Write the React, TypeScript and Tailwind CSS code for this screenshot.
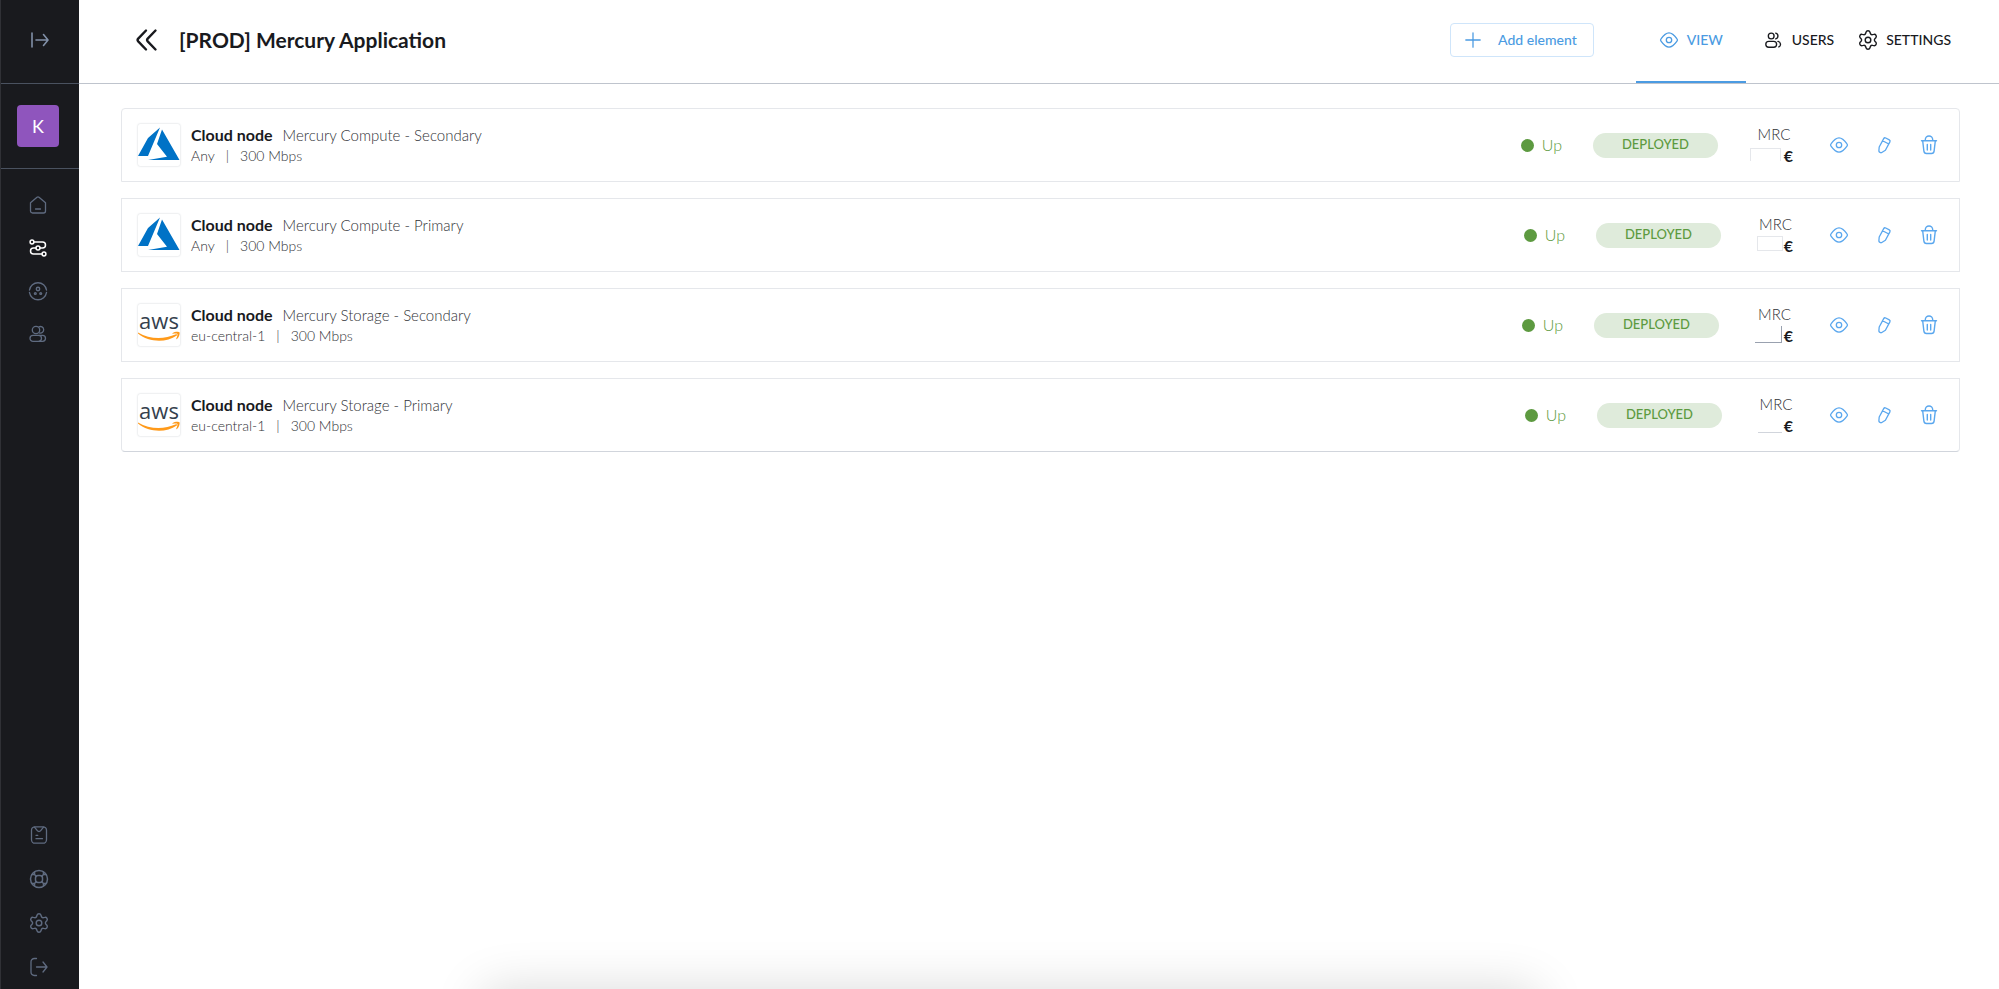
import { type ReactNode } from "react";

const Icon = ({
  className = "size-5",
  stroke = 1.3,
  children,
}: {
  className?: string;
  stroke?: number;
  children: ReactNode;
}) => (
  <svg
    viewBox="0 0 20 20"
    fill="none"
    stroke="currentColor"
    strokeWidth={stroke}
    strokeLinecap="round"
    strokeLinejoin="round"
    className={`shrink-0 ${className}`}
    aria-hidden="true"
  >
    {children}
  </svg>
);

const ExpandIcon = () => (
  <Icon stroke={1.6}>
    <path d="M2 3v14M6 10h12M13.500 4.500 18 10l-4.500 5.500" />
  </Icon>
);

const HomeIcon = () => (
  <Icon>
    <path d="M2.500 7.700 9 2.300a1.600 1.600 0 0 1 2 0l6.500 5.400v8.300a2 2 0 0 1-2 2h-11a2 2 0 0 1-2-2zM7.500 14h5" />
  </Icon>
);

const FlowIcon = () => (
  <Icon stroke={1.5}>
    <path d="M6 4h8.500a2.900 2.900 0 0 1 0 6H12M8 10H5.500a2.900 2.900 0 0 0 0 6H14" />
    <circle cx="4" cy="4" r="1.900" />
    <circle cx="10" cy="10" r="2" />
    <circle cx="16" cy="16" r="1.900" />
  </Icon>
);

const HubIcon = () => (
  <Icon stroke={1.4}>
    <path d="M1.500 9A8.600 8.600 0 0 1 18.500 9M1.500 11.500A8.600 8.600 0 0 0 18.500 11.500" />
    <circle cx="10" cy="8" r="1.700" />
    <circle cx="7.300" cy="12.500" r="0.900" />
    <circle cx="12.700" cy="12.500" r="0.900" />
  </Icon>
);

const TeamIcon = () => (
  <Icon>
    <circle cx="8" cy="6" r="3.700" />
    <path d="M11 2.800a3.300 3.300 0 1 1 .6 6.200" />
    <rect x="2" y="11.300" width="11.500" height="6" rx="3" />
    <path d="M11 11.300h3.500a3 3 0 0 1 0 6H11" />
  </Icon>
);

const ClipboardIcon = () => (
  <Icon>
    <rect x="2.500" y="1.800" width="15" height="16.400" rx="3.500" />
    <path d="M5.500 2.200 8.300 5.700a2.200 2.200 0 0 0 3.400 0L14.500 2.200M7 10.300h1.800M7 13.700h6.500" />
  </Icon>
);

const SupportIcon = () => (
  <Icon stroke={1.5}>
    <circle cx="10" cy="10" r="8.500" />
    <rect x="6.500" y="6.500" width="7" height="7" rx="2.500" />
    <path d="M5.500 3v2.500L7.200 7.200M14.500 3v2.500l-1.700 1.700M5.500 17v-2.500l1.700-1.700M14.500 17v-2.500l-1.700-1.700M3 5.500h2.500M17 5.500h-2.500M3 14.500h2.500M17 14.500h-2.500" />
  </Icon>
);

const GearIcon = ({ className }: { className?: string }) => (
  <Icon className={className} stroke={1.4}>
    <path d="M8 2.200a2.100 2.100 0 0 1 4 0l.3 1a2 2 0 0 0 2.400 1.400l1-.2a2.100 2.100 0 0 1 2 3.500l-.7.700a2 2 0 0 0 0 2.800l.7.700a2.100 2.100 0 0 1-2 3.500l-1-.2a2 2 0 0 0-2.400 1.400l-.3 1a2.100 2.100 0 0 1-4 0l-.3-1a2 2 0 0 0-2.400-1.400l-1 .2a2.100 2.100 0 0 1-2-3.500l.7-.7a2 2 0 0 0 0-2.800l-.7-.7a2.100 2.100 0 0 1 2-3.500l1 .2a2 2 0 0 0 2.400-1.400z" />
    <circle cx="10" cy="10" r="2.800" />
  </Icon>
);

const LogoutIcon = () => (
  <Icon>
    <path d="M7.500 1.500H5.300A3.300 3.300 0 0 0 2 4.800v10.400a3.300 3.300 0 0 0 3.300 3.300h2.200M7.500 10H18M14 5l4 5-4 5" />
  </Icon>
);

const UsersIcon = () => (
  <Icon className="size-[18px]" stroke={1.5}>
    <circle cx="8" cy="5.500" r="3.200" />
    <rect x="2" y="11.500" width="12" height="6.500" rx="3.250" />
    <path d="M13 2.300a3.300 3.300 0 0 1 0 6.400M15.500 11.500a3.300 3.300 0 0 1 1 6.200" />
  </Icon>
);

const EyeIcon = () => (
  <Icon>
    <path d="M2 8.800C4 6 6.500 2.800 10 2.800S16 6 18 8.800a2 2 0 0 1 0 2.400C16 14 13.500 17.200 10 17.200S4 14 2 11.200a2 2 0 0 1 0-2.400z" />
    <circle cx="10" cy="10" r="2.700" />
  </Icon>
);

const PencilIcon = () => (
  <Icon>
    <path d="M9.700 3.600a1.500 1.500 0 0 1 2-.6l3.600 1.900a1.500 1.500 0 0 1 .6 2l-4.500 8.400-3.600 2.200a1.500 1.500 0 0 1-1.600 0l-.6-.4a1.500 1.500 0 0 1-.7-1.400l.3-3.700zM8.600 5.700l6.200 3.300" />
  </Icon>
);

const TrashIcon = () => (
  <Icon stroke={1.4}>
    <path d="M2.500 5.800h15M6.300 5.800V4.700a3.700 3.700 0 0 1 7.400 0v1.100M3.700 6l1.200 10.200a2.600 2.600 0 0 0 2.600 2.300h5a2.600 2.600 0 0 0 2.600-2.300L16.300 6M8.300 9.500V15M11.700 9.500V15" />
  </Icon>
);

const AzureLogo = () => (
  <svg viewBox="0 0 42 42" className="size-full" role="img" aria-label="Azure">
    <path fill="#0072c6" d="M0 32 10 14 22 3.500 10 32zM24 5.500 41.500 36H10l19-3.300L19 20z" />
  </svg>
);

const AwsLogo = () => (
  <svg viewBox="0 0 42 42" className="size-full" role="img" aria-label="AWS">
    <text x="21" y="25" textAnchor="middle" fontFamily="Open Sans, sans-serif" fontSize="22" fontWeight="500" fill="#353f4d">
      aws
    </text>
    <path fill="#ff9a1a" d="M0 28.500C12 35.500 26 35.500 38 30.300c1-.4 1.700.6.800 1.200C28 39 11 38.500 0 29.500z" />
    <path fill="#ff9a1a" d="M34.500 29.200c2.500-1.800 6.500-1.500 7-.8.500.8-.4 4.800-2.500 6.600-.6.400-.9.100-.7-.4.700-1.500 1.500-4 1.100-4.600-.5-.6-3-.4-4.500-.2-.5 0-.8-.3-.4-.6z" />
  </svg>
);

type Node = {
  name: string;
  region: string;
  logo: ReactNode;
  card: string;
  price: string;
  mask: string;
};

const nodes: Node[] = [
  {
    name: "Mercury Compute - Secondary",
    region: "Any",
    logo: <AzureLogo />,
    card: "rounded-t border-gray-200",
    price: "w-[38px]",
    mask: "-left-[5px] top-[3px] w-[31px] h-[13px] border-x border-t border-gray-200",
  },
  {
    name: "Mercury Compute - Primary",
    region: "Any",
    logo: <AzureLogo />,
    card: "border-gray-200",
    price: "w-[35px]",
    mask: "-left-px top-px w-[26px] h-[15px] border border-gray-200",
  },
  {
    name: "Mercury Storage - Secondary",
    region: "eu-central-1",
    logo: <AwsLogo />,
    card: "border-gray-200",
    price: "w-[37px]",
    mask: "-left-px top-px w-[27px] h-[17px] border-r border-b border-gray-400",
  },
  {
    name: "Mercury Storage - Primary",
    region: "eu-central-1",
    logo: <AwsLogo />,
    card: "rounded-b border-gray-200 border-b-gray-300",
    price: "w-[34px]",
    mask: "-left-px -top-px w-[24px] h-[19px] border-b border-gray-300",
  },
];

const SideButton = ({ label, children }: { label: string; children: ReactNode }) => (
  <button type="button" aria-label={label} className="flex h-full w-full items-center justify-center">
    {children}
  </button>
);

const Sidebar = () => (
  <aside className="flex w-[79px] shrink-0 flex-col border-l border-[#303136] bg-[#191a1e] text-[#5f6b80]">
    <div className="flex h-[84px] items-center justify-center border-b border-[#4a5260] pb-1 text-[#8190a8]">
      <button type="button" aria-label="Expand menu">
        <ExpandIcon />
      </button>
    </div>
    <div className="flex h-[85px] items-center justify-center border-b border-[#4a5260] pr-1">
      <button type="button" className="size-[42px] rounded bg-[#8f55bd] text-lg text-white">
        K
      </button>
    </div>
    <nav className="grid grow auto-rows-[43px] content-start pt-[14px] pr-[5px]">
      <SideButton label="Home">
        <HomeIcon />
      </SideButton>
      <div className="text-white">
        <SideButton label="Applications">
          <FlowIcon />
        </SideButton>
      </div>
      <SideButton label="Hub">
        <HubIcon />
      </SideButton>
      <SideButton label="Team">
        <TeamIcon />
      </SideButton>
    </nav>
    <div className="grid auto-rows-[44px] pr-[3px]">
      <SideButton label="Orders">
        <ClipboardIcon />
      </SideButton>
      <SideButton label="Support">
        <SupportIcon />
      </SideButton>
      <SideButton label="Settings">
        <GearIcon />
      </SideButton>
      <SideButton label="Log out">
        <LogoutIcon />
      </SideButton>
    </div>
  </aside>
);

const Header = () => (
  <header className="flex h-[84px] items-stretch border-b border-[#bfc4cd] pl-14 pr-12">
    <div className="flex grow items-center pb-1">
      <button type="button" aria-label="Back" className="mr-5">
        <svg viewBox="0 0 24 24" className="size-6" fill="none" stroke="#191a1e" strokeWidth="2.400" strokeLinecap="round" strokeLinejoin="round">
          <path d="M11 2.500 3.200 10.700a2 2 0 0 0 0 2.700L11 21.500M20.500 2.500l-7.800 8.200a2 2 0 0 0 0 2.700l7.800 8.100" />
        </svg>
      </button>
      <h1 className="text-[21px] leading-7 font-bold text-[#191a1e]">[PROD] Mercury Application</h1>
    </div>
    <div className="mr-[42px] flex items-center pb-1">
      <button
        type="button"
        className="flex h-[34px] w-36 items-center justify-between rounded border border-[#cfe5fa] pl-[14px] pr-4 text-sm font-medium text-[#4b9be2]"
      >
        <Icon className="size-4" stroke={1.6}>
          <path d="M10 1v18M1 10h18" />
        </Icon>
        Add element
      </button>
    </div>
    <nav className="flex text-sm font-medium text-[#191a1e]">
      <a href="#view" className="flex w-[110px] items-center justify-center gap-2 border-b-2 border-[#4b9be2] pb-[2px] text-[#4b9be2]">
        <EyeIcon />
        VIEW
      </a>
      <a href="#users" className="flex items-center gap-[10px] pb-1 pl-[18px]">
        <UsersIcon />
        USERS
      </a>
      <a href="#settings" className="flex items-center gap-2 pb-1 pl-6">
        <GearIcon />
        SETTINGS
      </a>
    </nav>
  </header>
);

const NodeCard = ({ node }: { node: Node }) => (
  <li className={`flex h-[74px] items-center border pl-4 pr-5 ${node.card}`}>
    <div className="size-[42px] shrink-0 rounded-xs shadow-[0_0_2px_#c4c8ce]">{node.logo}</div>
    <div className="ml-[11px] grow font-light text-[#303236]">
      <div className="flex items-baseline gap-[10px] text-[15px] leading-[22px]">
        <strong className="text-base leading-[22px] font-bold text-[#191a1e]">Cloud node</strong>
        <span>{node.name}</span>
      </div>
      <div className="flex gap-[11px] text-sm leading-5">
        <span>{node.region}</span>
        <span>|</span>
        <span>300 Mbps</span>
      </div>
    </div>
    <div className="mr-[31px] flex items-center gap-2 text-base font-light text-[#5d9a40]">
      <span className="size-[13px] rounded-full bg-[#5d9a40]" />
      Up
    </div>
    <div className="mr-[37px] flex h-[25px] w-[125px] items-center justify-center rounded-full bg-[#dfebdb] text-[13px] font-medium text-[#5d9a40]">
      DEPLOYED
    </div>
    <div className={`mr-9 leading-[22px] ${node.price}`}>
      <div className="flex justify-center text-[15px] leading-[22px] font-light text-[#303236]">MRC</div>
      <div className="relative text-right font-bold text-[#191a1e]">
        <span className={`absolute bg-white ${node.mask}`} />€
      </div>
    </div>
    <div className="flex gap-[25px] text-[#5aa7ee]">
      <button type="button" aria-label={`View ${node.name}`}>
        <EyeIcon />
      </button>
      <button type="button" aria-label={`Edit ${node.name}`}>
        <PencilIcon />
      </button>
      <button type="button" aria-label={`Delete ${node.name}`}>
        <TrashIcon />
      </button>
    </div>
  </li>
);

const App = () => (
  <div className="flex min-h-screen bg-white font-['Lato',sans-serif]">
    <Sidebar />
    <div className="relative flex min-w-0 grow flex-col overflow-hidden">
      <Header />
      <main className="grow pt-6 pr-[39px] pl-[42px]">
        <ul className="flex flex-col gap-4">
          {nodes.map((node) => (
            <NodeCard key={node.name} node={node} />
          ))}
        </ul>
      </main>
      <div className="absolute top-full right-[24%] left-[21%] h-40 rounded-xl shadow-[0_0_50px_rgba(0,0,0,0.15)]" />
    </div>
  </div>
);

export default App;
